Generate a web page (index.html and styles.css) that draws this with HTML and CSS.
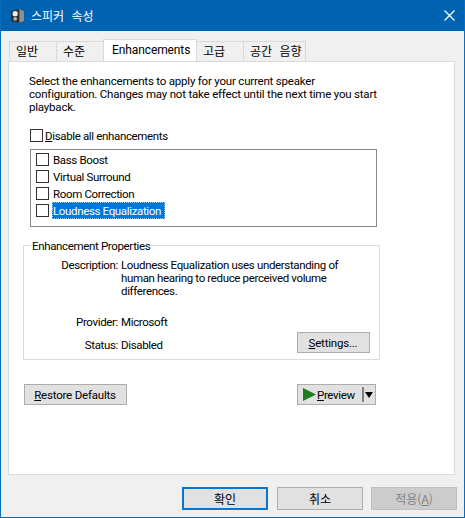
FILE: index.html
```html
<!DOCTYPE html>
<html lang="ko">

<head>
    <meta charset="UTF-8">
    <meta name="viewport" content="width=device-width, initial-scale=1.0">
    <title>스피커 속성</title>
    <link rel="stylesheet" href="styles.css">
</head>

<body>
    <div class="window">
        <div class="titlebar">
            <svg class="app-icon" width="13" height="14" viewBox="0 0 14 15">
                <path d="M0 2 L9 0 L14 2 L14 13 L9 15 L0 13 Z" fill="#2f2f2f" />
                <path d="M9 0 L14 2 L14 13 L9 15 Z" fill="#8f8f8f" />
                <circle cx="4.5" cy="5" r="2.8" fill="#ededed" />
                <circle cx="4.5" cy="10.5" r="2" fill="#b5b5b5" />
            </svg>
            <div class="title">스피커 속성</div>
            <svg class="close" width="11" height="11" viewBox="0 0 11 11">
                <path d="M0.5 0.5 L10.5 10.5 M10.5 0.5 L0.5 10.5" stroke="#fff" stroke-width="1.2" fill="none" />
            </svg>
        </div>

        <div class="content">
            <div class="tabs">
                <div class="tab">일반</div>
                <div class="tab">수준</div>
                <div class="tab active">Enhancements</div>
                <div class="tab">고급</div>
                <div class="tab tab-wide">공간 음향</div>
            </div>

            <div class="panel">
                <p class="intro">Select the enhancements to apply for your current speaker<br>configuration. Changes may not take effect until the next time you start<br>playback.</p>

                <div class="disable-row">
                    <span class="check"></span>
                    <span><u>D</u>isable all enhancements</span>
                </div>

                <div class="listbox">
                    <div class="item"><span class="check"></span><span class="label">Bass Boost</span></div>
                    <div class="item"><span class="check"></span><span class="label">Virtual Surround</span></div>
                    <div class="item"><span class="check"></span><span class="label">Room Correction</span></div>
                    <div class="item"><span class="check"></span><span class="label selected">Loudness Equalization</span></div>
                </div>

                <div class="group">
                    <div class="legend">Enhancement Properties</div>
                    <div class="prop desc">
                        <div class="prop-name">Description:</div>
                        <div class="prop-value">Loudness Equalization uses understanding of<br>human hearing to reduce perceived volume<br>differences.</div>
                    </div>
                    <div class="prop provider">
                        <div class="prop-name">Provider:</div>
                        <div class="prop-value">Microsoft</div>
                    </div>
                    <div class="status-row">
                        <div class="prop">
                            <div class="prop-name">Status:</div>
                            <div class="prop-value">Disabled</div>
                        </div>
                        <div class="btn settings"><span><u>S</u>ettings...</span></div>
                    </div>
                </div>

                <div class="actions">
                    <div class="btn restore"><span><u>R</u>estore Defaults</span></div>
                    <div class="btn preview">
                        <svg class="play" width="13" height="13" viewBox="0 0 13 13">
                            <path d="M0 0 L13 6.5 L0 13 Z" fill="#1e7d1e" />
                        </svg>
                        <span class="preview-text"><u>P</u>review</span>
                        <span class="divider"></span>
                        <span class="arrow"></span>
                    </div>
                </div>
            </div>

            <div class="footer">
                <div class="btn dlg default">확인</div>
                <div class="btn dlg">취소</div>
                <div class="btn dlg disabled">적용(<u>A</u>)</div>
            </div>
        </div>
    </div>
</body>

</html>
```

FILE: styles.css
```css
* {
    padding: 0;
    margin: 0;
    box-sizing: border-box;
}

body {
    font-family: Roboto, "Noto Sans CJK KR", sans-serif;
    font-size: 11.5px;
    letter-spacing: -0.35px;
    color: #000;
    background-color: #f0f0f0;
}

.window {
    width: 465px;
    height: 518px;
    border: 1px solid #0a6cbd;
    border-top: none;
    background-color: #f0f0f0;
    display: flex;
    flex-direction: column;
}

.titlebar {
    height: 31px;
    background-color: #0063b1;
    display: flex;
    align-items: center;
    padding: 0 9px 0 10px;
    color: #fff;
}

.title {
    margin-left: 7px;
    font-family: "Noto Sans CJK KR", sans-serif;
    font-size: 12px;
    letter-spacing: 0;
    word-spacing: 4px;
    flex: 1;
}

.content {
    flex: 1;
    padding: 10px 7px 0 7px;
    display: flex;
    flex-direction: column;
}

.tabs {
    display: flex;
    height: 20px;
    padding-left: 2px;
}

.tab {
    height: 20px;
    width: 48px;
    margin-left: -1px;
    border: 1px solid #d9d9d9;
    border-bottom: none;
    background-color: #f0f0f0;
    padding: 1px 0 0 6px;
    font-family: "Noto Sans CJK KR", sans-serif;
    font-size: 12px;
    line-height: 16px;
    letter-spacing: 0;
    word-spacing: 4px;
}

.tab.active {
    position: relative;
    width: 94px;
    height: 22px;
    margin-top: -2px;
    padding: 2px 0 0 8px;
    background-color: #fff;
    font-family: Roboto, sans-serif;
    font-size: 12px;
    letter-spacing: -0.1px;
    z-index: 1;
}

.tab-wide {
    width: 63px;
}

.panel {
    width: 447px;
    height: 414px;
    background-color: #fff;
    border: 1px solid #d9d9d9;
    padding: 13px 0 0 14px;
}

.intro {
    margin-left: 6px;
    line-height: 13px;
    letter-spacing: -0.2px;
}

.disable-row {
    display: flex;
    align-items: center;
    margin: 15px 0 0 7px;
    height: 13px;
}

.disable-row .check {
    margin-right: 2px;
}

.check {
    display: inline-block;
    width: 13px;
    height: 13px;
    border: 1px solid #333;
    background-color: #fff;
    flex-shrink: 0;
}

.listbox {
    width: 347px;
    height: 78px;
    margin: 7px 0 0 7px;
    border: 1px solid #828790;
    padding: 1px 0 0 5px;
}

.item {
    height: 17px;
    display: flex;
    align-items: center;
}

.label {
    margin-left: 3px;
    padding: 0 1px;
    height: 17px;
    line-height: 19px;
}

.label.selected {
    width: 113px;
    background-color: #0078d7;
    color: #fff;
    outline: 1px dotted #9cc9ee;
    outline-offset: -1px;
}

.group {
    position: relative;
    width: 357px;
    height: 115px;
    margin-top: 18px;
    border: 1px solid #dcdcdc;
    padding: 13px 9px 0 0;
}

.legend {
    position: absolute;
    top: -7px;
    left: 7px;
    padding: 0 1px;
    background-color: #fff;
    line-height: 14px;
}

.prop {
    display: flex;
    line-height: 13px;
}

.prop-name {
    width: 94px;
    text-align: right;
    margin-right: 3px;
}

.provider {
    margin-top: 18px;
}

.status-row {
    display: flex;
    justify-content: space-between;
    align-items: flex-end;
    margin-top: 3px;
}

.status-row .prop {
    margin-bottom: 1px;
}

.btn {
    background-color: #e1e1e1;
    border: 1px solid #adadad;
    display: flex;
    align-items: center;
    justify-content: center;
    letter-spacing: -0.2px;
}

.settings {
    width: 73px;
    height: 21px;
    padding-right: 1px;
}

.actions {
    display: flex;
    justify-content: space-between;
    width: 352px;
    margin: 24px 0 0 1px;
}

.restore {
    width: 103px;
    height: 21px;
    padding-right: 1px;
}

.preview {
    width: 79px;
    height: 21px;
    justify-content: flex-start;
    padding-left: 5px;
    letter-spacing: -0.35px;
}

.preview-text {
    margin-left: 1px;
    width: 45px;
}

.divider {
    width: 2px;
    height: 15px;
    background-color: #808080;
}

.arrow {
    margin-left: 1px;
    border-left: 4.5px solid transparent;
    border-right: 4.5px solid transparent;
    border-top: 6px solid #000;
}

.footer {
    display: flex;
    justify-content: flex-end;
    gap: 8px;
    margin-top: 12px;
}

.dlg {
    width: 86px;
    height: 23px;
    font-family: "Noto Sans CJK KR", sans-serif;
    font-size: 12px;
    letter-spacing: 0;
}

.dlg.default {
    margin-right: 1px;
    border: 2px solid #0078d7;
}

.dlg.disabled {
    background-color: #ccc;
    border-color: #bfbfbf;
    color: #838383;
}
```
